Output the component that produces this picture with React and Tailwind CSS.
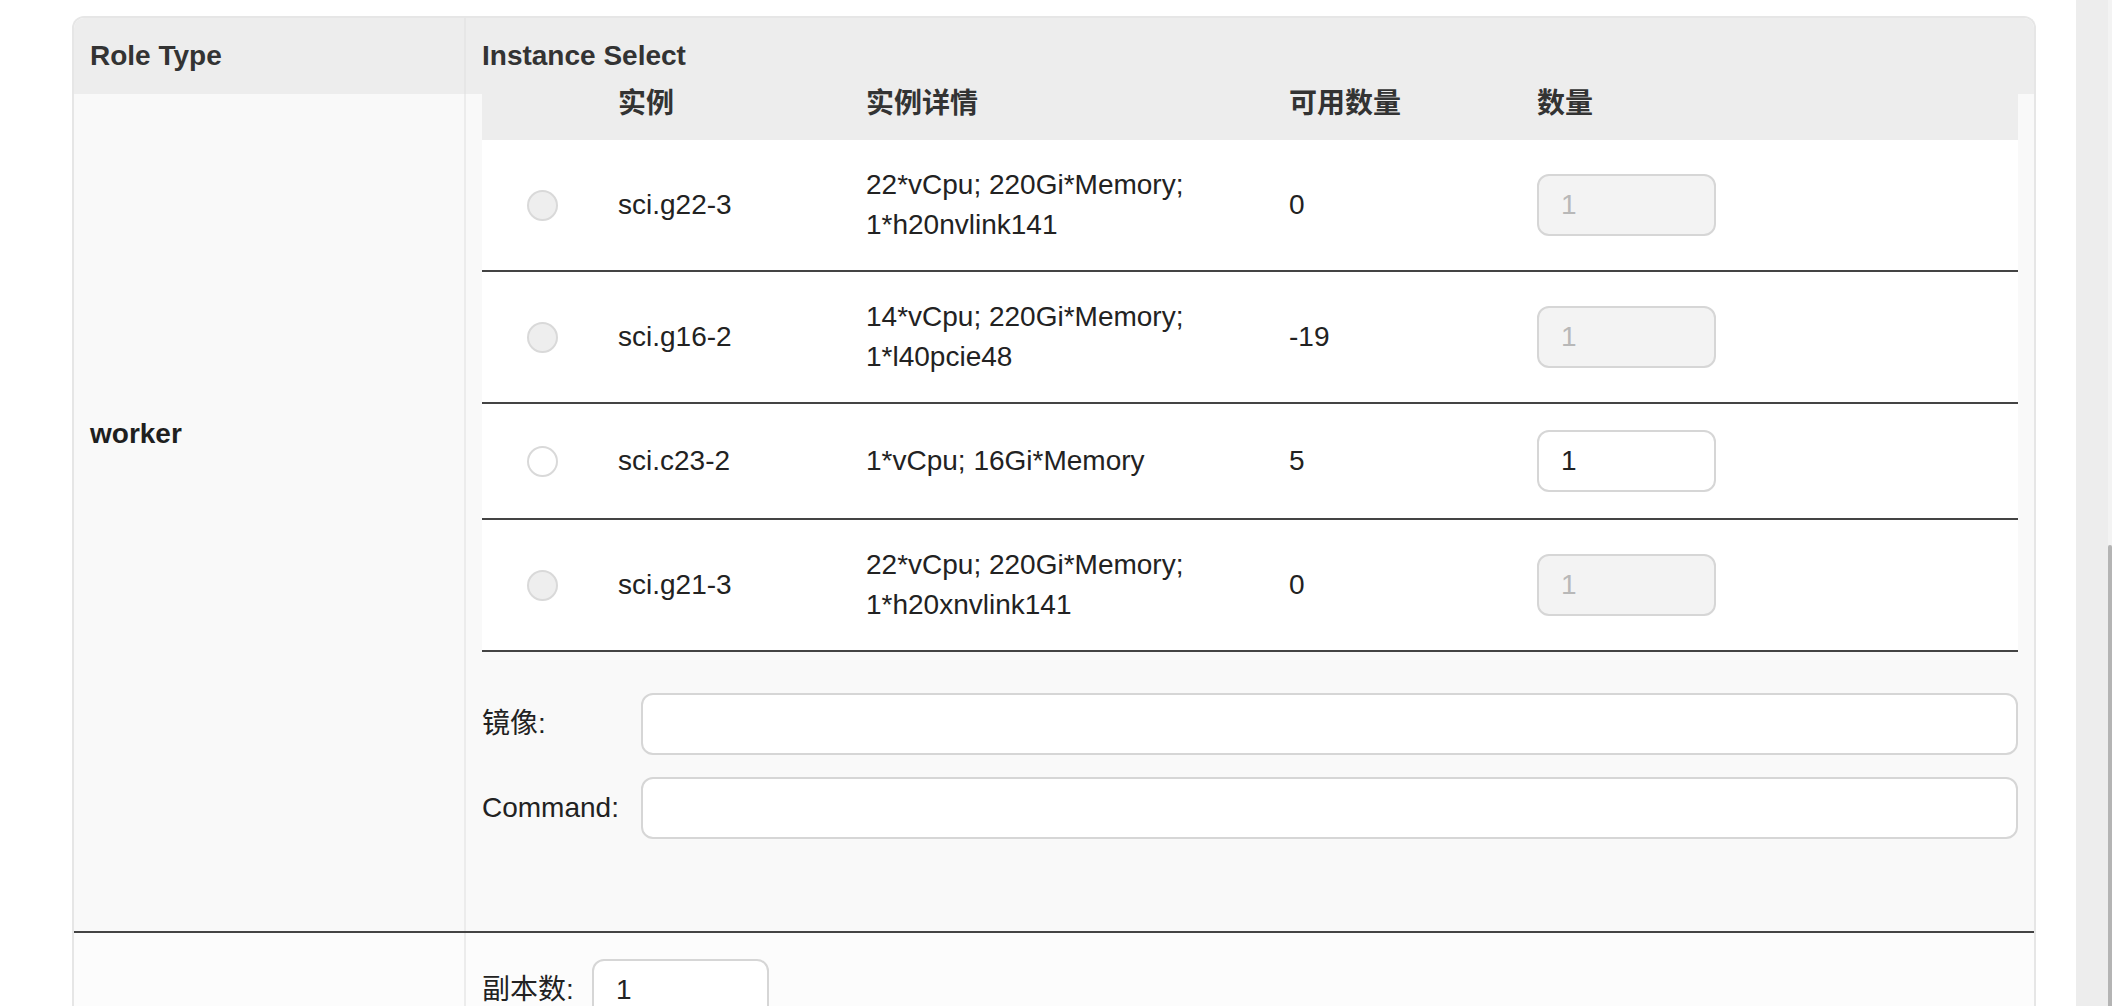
import React from "react";

const instances = [
  { name: "sci.g22-3", spec: ["22*vCpu; 220Gi*Memory;", "1*h20nvlink141"], avail: "0", enabled: false },
  { name: "sci.g16-2", spec: ["14*vCpu; 220Gi*Memory;", "1*l40pcie48"], avail: "-19", enabled: false },
  { name: "sci.c23-2", spec: ["1*vCpu; 16Gi*Memory"], avail: "5", enabled: true },
  { name: "sci.g21-3", spec: ["22*vCpu; 220Gi*Memory;", "1*h20xnvlink141"], avail: "0", enabled: false },
];

function Radio({ enabled }) {
  return (
    <span
      className={
        "ml-[45px] block h-[31px] w-[31px] rounded-full border-2 border-[#d9d9d9] " +
        (enabled ? "bg-white" : "bg-[#eeeeee]")
      }
    />
  );
}

function QtyInput({ enabled }) {
  return (
    <input
      disabled={!enabled}
      defaultValue="1"
      className={
        "h-[62px] w-[179px] rounded-[12px] border-2 border-[#d6d6d6] px-[22px] text-[28px] outline-none " +
        (enabled ? "bg-white text-[#222]" : "bg-[#f3f3f3] text-[#b8b8b8]")
      }
    />
  );
}

function InstanceTable() {
  return (
    <div>
      <div className="grid h-[46px] grid-cols-[136px_248px_423px_248px_1fr] items-start bg-[#ededed] font-bold leading-[20px] text-[#333]">
        <div />
        <div>实例</div>
        <div>实例详情</div>
        <div>可用数量</div>
        <div>数量</div>
      </div>
      {instances.map((r) => (
        <div
          key={r.name}
          className="grid min-h-[116px] grid-cols-[136px_248px_423px_248px_1fr] items-center border-b-2 border-[#444] bg-white py-[25px] text-[#222]"
        >
          <div>
            <Radio enabled={r.enabled} />
          </div>
          <div>{r.name}</div>
          <div>
            {r.spec.map((line) => (
              <span key={line} className="block">
                {line}
              </span>
            ))}
          </div>
          <div>{r.avail}</div>
          <div>
            <QtyInput enabled={r.enabled} />
          </div>
        </div>
      ))}
    </div>
  );
}

function FieldRow({ label }) {
  return (
    <div className="flex items-center">
      <label className="w-[159px] shrink-0 text-[#222]">{label}</label>
      <input className="h-[62px] flex-1 rounded-[12px] border-2 border-[#d6d6d6] bg-white px-[22px] text-[28px] outline-none" />
    </div>
  );
}

export default function App() {
  return (
    <div className="flex h-[1006px] w-full overflow-hidden bg-white font-['Liberation_Sans','Noto_Sans_CJK_SC',sans-serif] text-[28px] leading-[40px]">
      <main className="flex-1 pl-[72px] pr-[40px] pt-[16px]">
        <div className="w-[1964px] overflow-hidden rounded-t-[12px] border-2 border-b-0 border-[#e6e6e6]">
          {/* table head */}
          <div className="grid h-[76px] grid-cols-[392px_1fr] bg-[#ededed] font-bold text-[#333]">
            <div className="flex items-center border-r-2 border-[#e6e6e6] pl-[16px]">Role Type</div>
            <div className="flex items-center pl-[16px]">Instance Select</div>
          </div>

          {/* worker role */}
          <div className="grid grid-cols-[392px_1fr] border-b-2 border-[#444] bg-[#f9f9f9]">
            <div className="border-r-2 border-[#ececec] pl-[16px] pt-[320px] font-bold text-[#1f1f1f]">worker</div>
            <div className="px-[16px] pb-[92px]">
              <InstanceTable />
              <div className="mt-[41px] flex flex-col gap-[22px]">
                <FieldRow label="镜像:" />
                <FieldRow label="Command:" />
              </div>
            </div>
          </div>

          {/* replicas */}
          <div className="grid h-[200px] grid-cols-[392px_1fr] bg-[#fcfcfc]">
            <div className="border-r-2 border-[#ececec]" />
            <div className="px-[16px] pt-[26px]">
              <div className="flex items-center">
                <label className="w-[110px] shrink-0 text-[#222]">副本数:</label>
                <input
                  defaultValue="1"
                  className="h-[62px] w-[177px] rounded-[12px] border-2 border-[#d6d6d6] bg-white px-[22px] text-[28px] text-[#222] outline-none"
                />
              </div>
            </div>
          </div>
        </div>
      </main>

      {/* page scrollbar */}
      <div className="flex w-[36px] shrink-0 bg-[#ededed]">
        <div className="flex-1" />
        <div className="flex w-[4px] flex-col">
          <div className="h-[545px] bg-[#f3f3f3]" />
          <div className="flex-1 rounded-t-[3px] bg-[#b4b4b4]" />
        </div>
      </div>
    </div>
  );
}
